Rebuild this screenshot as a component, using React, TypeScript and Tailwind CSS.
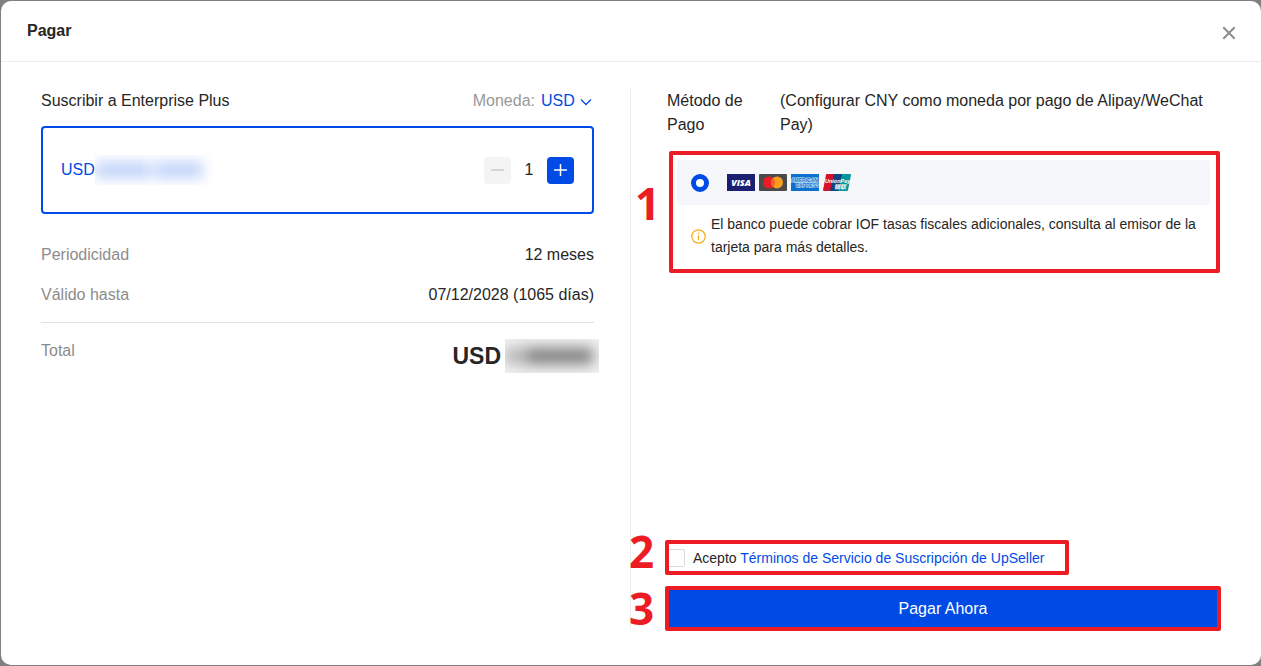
import { useState } from "react";

const VisaLogo = () => (
  <svg width="28" height="17" viewBox="0 0 28 17" aria-label="Visa">
    <rect width="28" height="17" fill="#1a1f71" />
    <text
      x="14"
      y="12"
      textAnchor="middle"
      fontFamily="Open Sans, sans-serif"
      fontSize="9"
      fontWeight="800"
      fontStyle="italic"
      fill="#fff"
    >
      VISA
    </text>
  </svg>
);

const MastercardLogo = () => (
  <svg width="28" height="17" viewBox="0 0 28 17" aria-label="Mastercard">
    <rect width="28" height="17" rx="1" fill="#4a4a4a" />
    <circle cx="10" cy="8.5" r="6" fill="#eb1c26" />
    <circle cx="18" cy="8.5" r="6" fill="#f99f1b" />
    <path d="M14 4a6 6 0 0 1 0 9a6 6 0 0 1 0-9z" fill="#f26122" />
  </svg>
);

const AmexLogo = () => (
  <svg width="28" height="17" viewBox="0 0 28 17" aria-label="American Express">
    <rect width="28" height="17" fill="#0a72ce" />
    <g
      fontFamily="Liberation Sans, sans-serif"
      fontSize="5"
      fontWeight="700"
      fill="#0a72ce"
      stroke="#d5e8f8"
      strokeWidth="1"
      paintOrder="stroke"
    >
      <text x="0" y="8">AMERICAN</text>
      <text x="5" y="13">EXPRESS</text>
    </g>
  </svg>
);

const UnionPayLogo = () => (
  <svg width="28" height="17" viewBox="0 0 28 17" aria-label="UnionPay">
    <path d="M4 0H13L9 17H1Q0 17 0 16L3 1Q3 0 4 0z" fill="#d8112b" />
    <path d="M11 0H20L16 17H7z" fill="#12457f" />
    <path d="M19 0H27Q28 0 28 1L25 16Q25 17 24 17H15z" fill="#04969a" />
    <g fill="#fff" fontStyle="italic" fontWeight="700">
      <text x="2" y="9" fontFamily="Liberation Sans, sans-serif" fontSize="5.5">
        UnionPay
      </text>
      <text x="11" y="15" fontFamily="Noto Sans CJK SC, sans-serif" fontSize="6">
        银联
      </text>
    </g>
  </svg>
);

const InfoIcon = () => (
  <svg width="15" height="15" viewBox="0 0 15 15" fill="none" stroke="#faad14" className="shrink-0">
    <circle cx="7.5" cy="7.5" r="6.7" strokeWidth="1.2" />
    <path d="M7.5 6.3V11.2" strokeWidth="1.2" />
    <path d="M7.5 3.7V5" strokeWidth="1.4" />
  </svg>
);

// red number drawn on the left side of each step
const StepNumber = ({ value, className }: { value: number; className: string }) => (
  <span
    className={`absolute font-['Open_Sans',sans-serif] text-[44px] leading-none font-bold text-[#ed1c24] ${className}`}
  >
    {value}
  </span>
);

const App = () => {
  const [quantity, setQuantity] = useState(1);
  const [accepted, setAccepted] = useState(false);

  return (
    <div className="flex min-h-screen bg-[#808080] py-px pl-px font-['Liberation_Sans',Arial,sans-serif] text-base text-[#262626]">
      <div className="flex flex-1 flex-col rounded-[10px] bg-white">
        <header className="flex h-[61px] items-center justify-between border-b border-[#ececec] pr-6 pl-[26px]">
          <h1 className="font-bold">Pagar</h1>
          <button type="button" aria-label="Cerrar" className="pt-1">
            <svg width="16" height="16" viewBox="0 0 16 16" fill="none" stroke="#8c8c8c" strokeWidth="2">
              <path d="M2.3 2.3L13.7 13.7M13.7 2.3L2.3 13.7" />
            </svg>
          </button>
        </header>

        <main className="flex flex-1 pt-[27px] pr-[41px] pb-[34px] pl-10">
          {/* ==Plan== */}
          <section className="min-w-0 flex-1">
            <div className="flex items-center justify-between leading-6">
              <h2>Suscribir a Enterprise Plus</h2>
              <div className="flex gap-1.5">
                <label htmlFor="currency" className="text-[#999]">
                  Moneda:
                </label>
                <div className="grid items-center">
                  <select
                    id="currency"
                    defaultValue="USD"
                    className="col-start-1 row-start-1 w-[53px] appearance-none bg-transparent text-[#004be6]"
                  >
                    <option>USD</option>
                    <option>CNY</option>
                  </select>
                  <svg
                    width="12"
                    height="8"
                    viewBox="0 0 12 8"
                    fill="none"
                    stroke="#004be6"
                    strokeWidth="1.3"
                    className="pointer-events-none col-start-1 row-start-1 mt-0.5 mr-0.5 justify-self-end"
                  >
                    <path d="M1 1.5L6 6.5L11 1.5" />
                  </svg>
                </div>
              </div>
            </div>

            <div className="mt-[13px] flex h-[88px] items-center justify-between rounded border-2 border-[#004be6] px-[18px]">
              <div className="flex items-center text-[#004be6]">
                <span className="w-[34px] overflow-hidden">USD</span>
                <span aria-hidden="true" className="flex h-[30px] w-[118px] items-center gap-1 overflow-hidden">
                  <span className="h-4 w-14 bg-[#004be6]/25 blur-[7px]" />
                  <span className="h-4 w-12 bg-[#004be6]/25 blur-[7px]" />
                </span>
              </div>
              <div className="flex items-center">
                <button
                  type="button"
                  aria-label="Menos"
                  onClick={() => setQuantity(Math.max(1, quantity - 1))}
                  className="flex size-[27px] items-center justify-center rounded bg-[#f4f4f4]"
                >
                  <svg width="13" height="13" viewBox="0 0 13 13" stroke="#c4c4c4" strokeWidth="1.3">
                    <path d="M0 6H13" />
                  </svg>
                </button>
                <input
                  type="text"
                  aria-label="Cantidad"
                  value={quantity}
                  readOnly
                  className="w-9 text-center"
                />
                <button
                  type="button"
                  aria-label="Más"
                  onClick={() => setQuantity(quantity + 1)}
                  className="flex size-[27px] items-center justify-center rounded bg-[#004be6]"
                >
                  <svg width="13" height="13" viewBox="0 0 13 13" stroke="#fff" strokeWidth="1.5">
                    <path d="M0 6H13M6.5 0V12" />
                  </svg>
                </button>
              </div>
            </div>

            <dl className="mt-[29px] flex flex-col gap-4 border-b border-[#e0e0e0] pb-[15px] leading-6">
              <div className="flex justify-between">
                <dt className="text-[#8c8c8c]">Periodicidad</dt>
                <dd>12 meses</dd>
              </div>
              <div className="flex justify-between">
                <dt className="text-[#8c8c8c]">Válido hasta</dt>
                <dd>07/12/2028 (1065 días)</dd>
              </div>
            </dl>

            <div className="flex items-start justify-between pt-4 leading-6">
              <span className="text-[#8c8c8c]">Total</span>
              <div className="-mr-[5px] flex items-center gap-1">
                <span className="text-[23px] font-bold">USD</span>
                <span
                  aria-hidden="true"
                  className="flex h-[34px] w-[94px] items-center overflow-hidden bg-[#f1f1f1]"
                >
                  <span className="h-4 w-5 bg-[#777]/50 blur-[7px]" />
                  <span className="h-4 w-[68px] bg-[#555]/75 blur-[7px]" />
                </span>
              </div>
            </div>
          </section>

          <div className="mx-9 mb-0.5 w-px bg-[#ececec]" />

          {/* ==Payment method== */}
          <section className="flex min-w-0 flex-1 flex-col">
            <div className="flex leading-6">
              <h2 className="w-[113px] shrink-0 pr-4">Método de Pago</h2>
              <p>(Configurar CNY como moneda por pago de Alipay/WeChat Pay)</p>
            </div>

            <div className="relative mt-3.5 ml-0.5 rounded-xs border-4 border-[#ed1c24] pt-[5px] pr-1.5 pb-2.5 pl-1">
              <StepNumber value={1} className="-left-[38px] top-[26px]" />
              <label className="flex h-[45px] items-center gap-[18px] rounded bg-[#f6f7fa] pl-3.5">
                <input
                  type="radio"
                  name="method"
                  aria-label="Tarjeta de crédito"
                  defaultChecked
                  className="size-[18px] appearance-none rounded-full border-5 border-[#004be6] bg-white"
                />
                <span className="flex gap-1">
                  <VisaLogo />
                  <MastercardLogo />
                  <AmexLogo />
                  <UnionPayLogo />
                </span>
              </label>
              <div className="flex items-center gap-[5px] pt-2 pl-3.5 text-sm leading-[23px]">
                <InfoIcon />
                <p>
                  El banco puede cobrar IOF tasas fiscales adicionales, consulta al emisor de la tarjeta para más
                  detalles.
                </p>
              </div>
            </div>

            <div className="-mr-px -ml-0.5 mt-auto flex flex-col items-start gap-[11px] pt-6">
              <div className="relative flex h-[35px] w-[404px] items-center rounded-xs border-4 border-[#ed1c24] text-sm">
                <StepNumber value={2} className="-left-10 -top-[15px]" />
                <input
                  id="terms"
                  type="checkbox"
                  checked={accepted}
                  onChange={(e) => setAccepted(e.target.checked)}
                  className="h-[18px] w-4 appearance-none rounded-r-xs border border-l-0 border-[#d9d9d9] checked:bg-[#004be6]"
                />
                <label htmlFor="terms" className="pl-2">
                  Acepto{" "}
                  <a href="#terms" className="text-[#004be6]">
                    Términos de Servicio de Suscripción de UpSeller
                  </a>
                </label>
              </div>

              <div className="relative w-full">
                <StepNumber value={3} className="-left-9 top-0" />
                <button
                  type="button"
                  className="h-[45px] w-full rounded-xs border-4 border-[#ed1c24] bg-[#004be6] text-white"
                >
                  Pagar Ahora
                </button>
              </div>
            </div>
          </section>
        </main>
      </div>
    </div>
  );
};

export default App;
